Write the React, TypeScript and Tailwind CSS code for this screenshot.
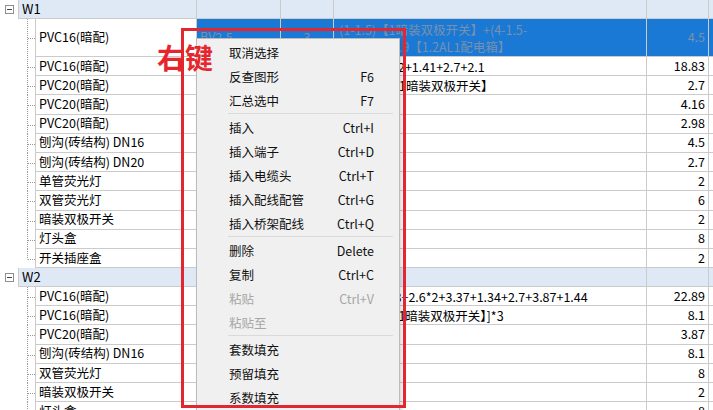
import React from 'react';

interface Row {
  name: string;
  c2?: string;
  c3?: string;
  formula?: React.ReactNode;
  qty?: string;
  selected?: boolean;
  tall?: boolean;
  last?: boolean;
}

interface Group {
  title: string;
  rows: Row[];
}

const groups: Group[] = [
  {
    title: 'W1',
    rows: [
      {
        name: 'PVC16(暗配)',
        c2: 'BV2.5',
        c3: '3',
        formula: (
          <>
            (1-1.5)【1暗装双极开关】+(4-1.5-
            <br />
            0.3)+1.2+0.9【1.2AL1配电箱】
          </>
        ),
        qty: '4.5',
        selected: true,
        tall: true,
      },
      { name: 'PVC16(暗配)', formula: '1.5+3.1+1.2+1.41+2.7+2.1', qty: '18.83' },
      { name: 'PVC20(暗配)', formula: '(1.5-1.3)【1暗装双极开关】', qty: '2.7' },
      { name: 'PVC20(暗配)', qty: '4.16' },
      { name: 'PVC20(暗配)', qty: '2.98' },
      { name: '刨沟(砖结构) DN16', qty: '4.5' },
      { name: '刨沟(砖结构) DN20', qty: '2.7' },
      { name: '单管荧光灯', qty: '2' },
      { name: '双管荧光灯', qty: '6' },
      { name: '暗装双极开关', qty: '2' },
      { name: '灯头盒', qty: '8' },
      { name: '开关插座盒', qty: '2', last: true },
    ],
  },
  {
    title: 'W2',
    rows: [
      { name: 'PVC16(暗配)', formula: '11+3.2+0.8+2.6*2+3.37+1.34+2.7+3.87+1.44', qty: '22.89' },
      { name: 'PVC16(暗配)', formula: '[(4 - 1.3)【1暗装双极开关】]*3', qty: '8.1' },
      { name: 'PVC20(暗配)', qty: '3.87' },
      { name: '刨沟(砖结构) DN16', qty: '8.1' },
      { name: '双管荧光灯', qty: '8' },
      { name: '暗装双极开关', qty: '2' },
      { name: '灯头盒', qty: '8' },
    ],
  },
];

type MenuEntry = { label: string; key?: string; disabled?: boolean } | 'sep';

const menu: MenuEntry[] = [
  { label: '取消选择' },
  { label: '反查图形', key: 'F6' },
  { label: '汇总选中', key: 'F7' },
  'sep',
  { label: '插入', key: 'Ctrl+I' },
  { label: '插入端子', key: 'Ctrl+D' },
  { label: '插入电缆头', key: 'Ctrl+T' },
  { label: '插入配线配管', key: 'Ctrl+G' },
  { label: '插入桥架配线', key: 'Ctrl+Q' },
  'sep',
  { label: '删除', key: 'Delete' },
  { label: '复制', key: 'Ctrl+C' },
  { label: '粘贴', key: 'Ctrl+V', disabled: true },
  { label: '粘贴至', disabled: true },
  'sep',
  { label: '套数填充' },
  { label: '预留填充' },
  { label: '系数填充' },
];

function TreeLink({ height, last }: { height: number; last?: boolean }) {
  const mid = Math.round(height / 2) + 0.5;
  return (
    <svg width="35" height={height} className="shrink-0 block">
      <line x1="27.5" y1="0" x2="27.5" y2={last ? mid : height} stroke="#9a9a9a" strokeDasharray="1 1" />
      <line x1="28" y1={mid} x2="35" y2={mid} stroke="#9a9a9a" strokeDasharray="1 1" />
    </svg>
  );
}

function DataRow({ row }: { row: Row }) {
  const h = row.tall ? 'h-[38px]' : 'h-[19.2px]';
  const sel = row.selected ? 'bg-[#1b79d6] text-[#7890ab]' : 'bg-white text-black';
  return (
    <div className={`flex ${h}`}>
      <TreeLink height={row.tall ? 38 : 19} last={row.last} />
      <div className="w-[162px] shrink-0 flex items-center pl-[3px] border-l border-r border-b border-[#cbcbcb] bg-white text-black whitespace-nowrap">
        {row.name}
      </div>
      <div className={`w-[84px] shrink-0 flex items-center pl-[3px] border-r border-b border-[#cbcbcb] ${sel}`}>
        {row.c2}
      </div>
      <div className={`w-[53px] shrink-0 flex items-center justify-center border-r border-b border-[#cbcbcb] ${sel}`}>
        {row.c3}
      </div>
      <div className={`w-[313px] shrink-0 flex items-center pl-[5px] border-r border-b border-[#cbcbcb] whitespace-nowrap overflow-hidden leading-[17px] ${sel}`}>
        <span>{row.formula}</span>
      </div>
      <div className={`w-[62px] shrink-0 flex items-center justify-end pr-[3px] border-r border-b border-[#cbcbcb] ${sel}`}>
        {row.qty}
      </div>
      <div className={`flex-1 border-b border-[#cbcbcb] ${row.selected ? 'bg-[#1b79d6]' : 'bg-white'}`} />
    </div>
  );
}

function GroupRow({ title }: { title: string }) {
  return (
    <div className="flex h-[19px]">
      <div className="w-[18px] shrink-0 flex items-center justify-center bg-white">
        <svg width="9" height="9" className="block">
          <rect x="0.5" y="0.5" width="8" height="8" fill="#fff" stroke="#8f8f8f" />
          <line x1="2" y1="4.5" x2="7" y2="4.5" stroke="#444" />
        </svg>
      </div>
      <div className="w-[179px] shrink-0 flex items-center pl-[3px] border-l border-r border-b border-[#cbcbcb] bg-[#dfe9f6] text-[13px] text-black">
        {title}
      </div>
      <div className="w-[84px] shrink-0 border-r border-b border-[#cbcbcb] bg-[#dfe9f6]" />
      <div className="w-[53px] shrink-0 border-r border-b border-[#cbcbcb] bg-[#dfe9f6]" />
      <div className="w-[313px] shrink-0 border-r border-b border-[#cbcbcb] bg-[#dfe9f6]" />
      <div className="w-[62px] shrink-0 border-r border-b border-[#cbcbcb] bg-[#dfe9f6]" />
      <div className="flex-1 border-b border-[#cbcbcb] bg-[#dfe9f6]" />
    </div>
  );
}

function ContextMenu() {
  return (
    <div className="absolute left-[196px] top-[38px] w-[204px] pt-[2px] pb-[2px] bg-[#f0f0f0] border border-[#bcbcbc] shadow-[2px_2px_3px_rgba(0,0,0,0.15)]">
      {menu.map((m, i) =>
        m === 'sep' ? (
          <div key={i} className="h-[3px] flex items-start pl-[31px] pr-[6px]">
            <div className="h-px w-full bg-[#dadada]" />
          </div>
        ) : (
          <div
            key={i}
            className={`h-[24px] flex items-center justify-between pl-[32px] pr-[25px] ${m.disabled ? 'text-[#a6a6a6]' : 'text-[#111]'}`}
          >
            <span>{m.label}</span>
            {m.key && <span>{m.key}</span>}
          </div>
        )
      )}
    </div>
  );
}

export default function App() {
  return (
    <div
      className="relative w-[713px] h-[410px] overflow-hidden bg-white text-[12.5px]"
      style={{ fontFamily: '"Noto Sans CJK SC", "Noto Sans", sans-serif' }}
    >
      <div className="flex flex-col">
        {groups.map((g) => (
          <React.Fragment key={g.title}>
            <GroupRow title={g.title} />
            {g.rows.map((r, i) => (
              <DataRow key={i} row={r} />
            ))}
          </React.Fragment>
        ))}
      </div>

      <ContextMenu />

      <div className="absolute left-[157px] top-[43px] text-[28px] leading-none font-bold text-[#e6262e]">
        右键
      </div>

      <div className="absolute left-[181px] top-[28px] w-[225px] h-[380px] border-[3px] border-[#e3262f] pointer-events-none" />
    </div>
  );
}
